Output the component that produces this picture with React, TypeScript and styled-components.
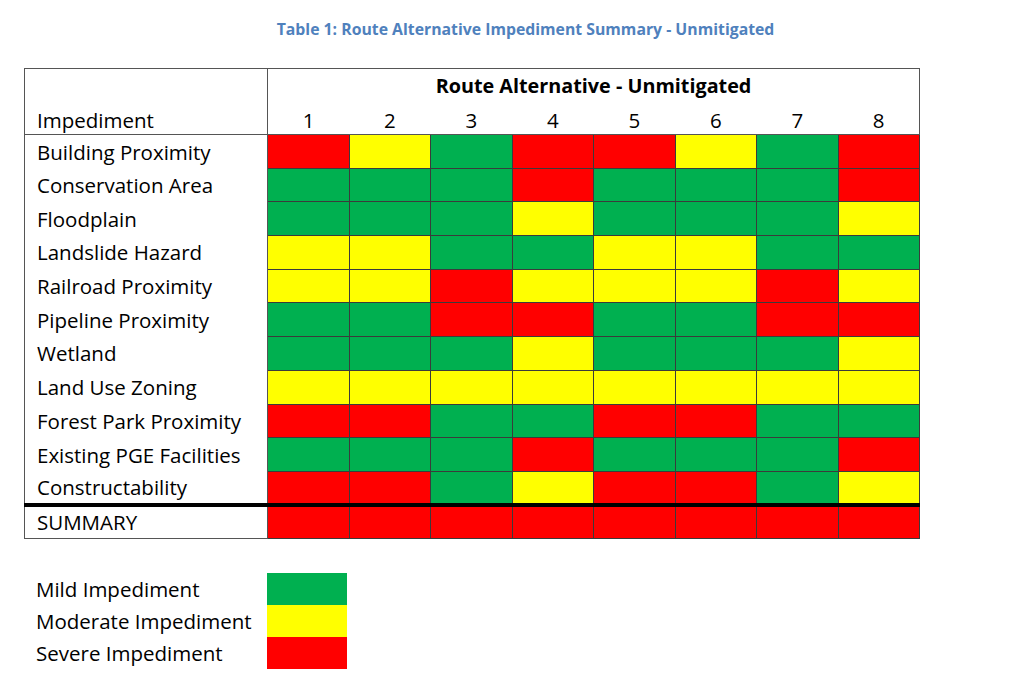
import React from "react";
import styled, { createGlobalStyle } from "styled-components";

const GlobalStyle = createGlobalStyle`
  body {
    margin: 0;
    background: #ffffff;
    font-family: "Open Sans", Lato, sans-serif;
    color: #000000;
  }
`;

const Page = styled.div`
  padding: 19px 0 0 24px;
`;

const Title = styled.h1`
  width: 1003px;
  margin: 0 0 28px;
  text-align: center;
  font-size: 15.8px;
  font-weight: 700;
  color: #4f81bd;
  line-height: 21px;
`;

const Table = styled.table`
  border-collapse: collapse;
  table-layout: fixed;
  width: 895px;
  border: 1px solid #555555;
`;

const Col = styled.col<{ $w: number }>`
  width: ${({ $w }) => $w}px;
`;

const HeadRow = styled.tr<{ $h: number }>`
  height: ${({ $h }) => $h}px;
`;

const NameHead = styled.th`
  padding: 0 0 1px 12px;
  text-align: left;
  vertical-align: bottom;
  font-size: 20.5px;
  line-height: 26px;
  font-weight: 400;
  border-right: 1px solid #555555;
  border-bottom: 1px solid #555555;
`;

const GroupHead = styled.th`
  padding: 4px 0 0;
  font-size: 19.8px;
  line-height: 26px;
  font-weight: 700;
  text-align: center;
  vertical-align: top;
`;

const NumHead = styled.th`
  padding: 0 0 1px;
  font-size: 20.5px;
  line-height: 26px;
  font-weight: 400;
  text-align: center;
  vertical-align: bottom;
  border-bottom: 1px solid #555555;
`;

const Row = styled.tr<{ $summary?: boolean }>`
  height: ${({ $summary }) => ($summary ? "33px" : "33.7px")};
  & > td {
    border-top: ${({ $summary }) => ($summary ? "4px solid #000000" : "")};
  }
`;

const NameCell = styled.td`
  padding: 0 0 0 12px;
  font-size: 20.5px;
  line-height: 26px;
  white-space: nowrap;
  border-right: 1px solid #555555;
`;

const levelColour: Record<Level, string> = {
  G: "#00b050",
  Y: "#ffff00",
  R: "#ff0000",
};

const Cell = styled.td<{ $level: Level }>`
  padding: 0;
  background: ${({ $level }) => levelColour[$level]};
  border: 1px solid #3b3b3b;
`;

const Legend = styled.div`
  display: grid;
  grid-template-columns: 243px 80px;
  grid-auto-rows: 32px;
  margin-top: 34px;
`;

const LegendLabel = styled.div`
  padding-left: 12px;
  font-size: 20.5px;
  display: flex;
  align-items: center;
`;

const Swatch = styled.div<{ $level: Level }>`
  background: ${({ $level }) => levelColour[$level]};
`;

type Level = "G" | "Y" | "R";

const rows: [string, string][] = [
  ["Building Proximity", "RYGRRYGR"],
  ["Conservation Area", "GGGRGGGR"],
  ["Floodplain", "GGGYGGGY"],
  ["Landslide Hazard", "YYGGYYGG"],
  ["Railroad Proximity", "YYRYYYRY"],
  ["Pipeline Proximity", "GGRRGGRR"],
  ["Wetland", "GGGYGGGY"],
  ["Land Use Zoning", "YYYYYYYY"],
  ["Forest Park Proximity", "RRGGRRGG"],
  ["Existing PGE Facilities", "GGGRGGGR"],
  ["Constructability", "RRGYRRGY"],
];

const legend: [string, Level][] = [
  ["Mild Impediment", "G"],
  ["Moderate Impediment", "Y"],
  ["Severe Impediment", "R"],
];

const routes = [1, 2, 3, 4, 5, 6, 7, 8];

export default function App() {
  return (
    <Page>
      <GlobalStyle />
      <Title>Table 1: Route Alternative Impediment Summary - Unmitigated</Title>
      <Table>
        <colgroup>
          <Col $w={243} />
          {routes.map((n) => (
            <Col key={n} $w={81.5} />
          ))}
        </colgroup>
        <thead>
          <HeadRow $h={35}>
            <NameHead rowSpan={2}>Impediment</NameHead>
            <GroupHead colSpan={8}>Route Alternative - Unmitigated</GroupHead>
          </HeadRow>
          <HeadRow $h={31}>
            {routes.map((n) => (
              <NumHead key={n}>{n}</NumHead>
            ))}
          </HeadRow>
        </thead>
        <tbody>
          {rows.map(([name, levels]) => (
            <Row key={name}>
              <NameCell>{name}</NameCell>
              {levels.split("").map((l, i) => (
                <Cell key={i} $level={l as Level} />
              ))}
            </Row>
          ))}
          <Row $summary>
            <NameCell>SUMMARY</NameCell>
            {routes.map((n) => (
              <Cell key={n} $level="R" />
            ))}
          </Row>
        </tbody>
      </Table>
      <Legend>
        {legend.map(([label, level]) => (
          <React.Fragment key={label}>
            <LegendLabel>{label}</LegendLabel>
            <Swatch $level={level} />
          </React.Fragment>
        ))}
      </Legend>
    </Page>
  );
}
